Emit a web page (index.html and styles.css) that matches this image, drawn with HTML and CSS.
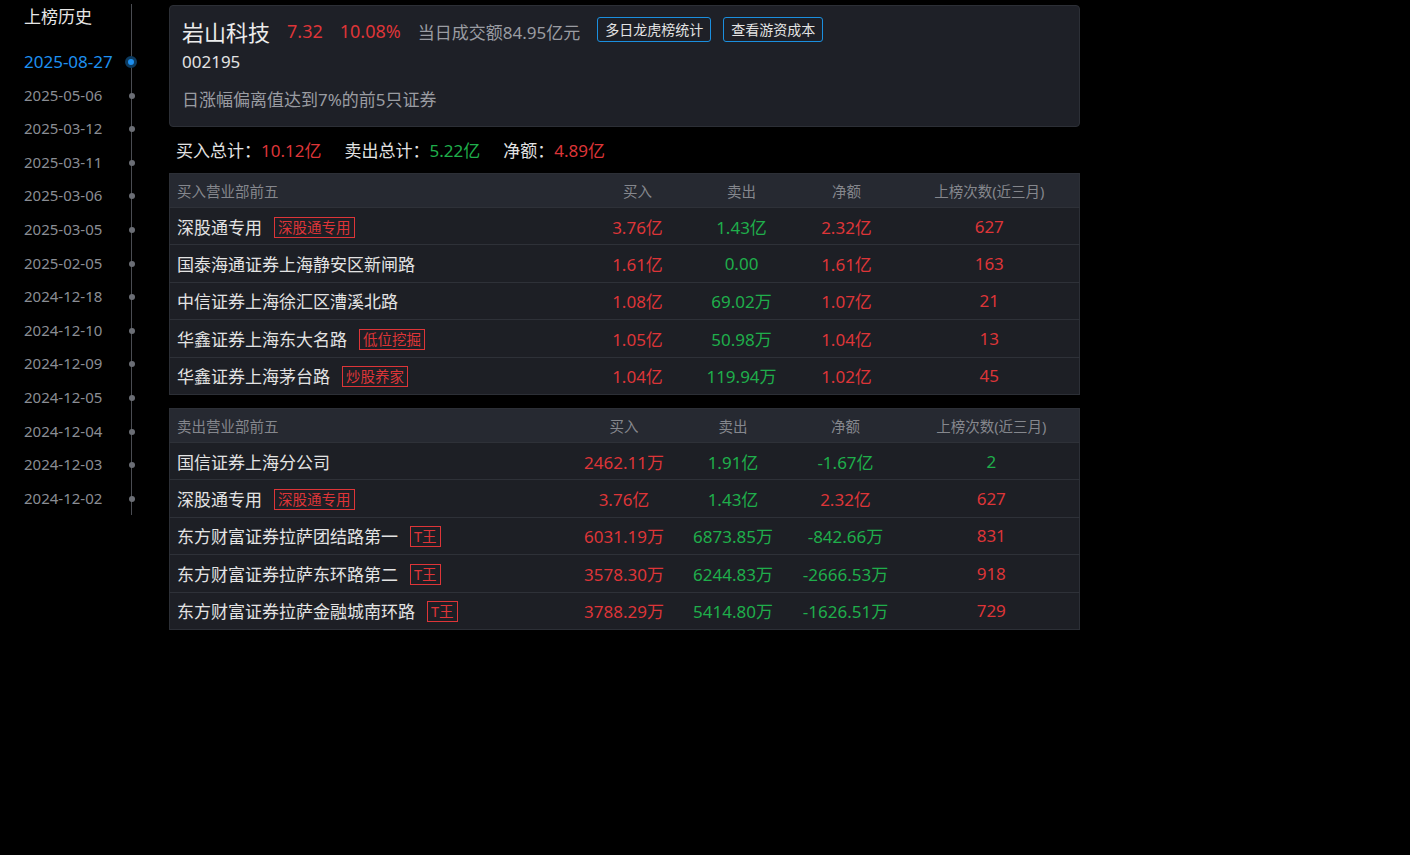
FILE: index.html
```html
<!DOCTYPE html>
<html lang="zh-CN">
<head>
  <meta charset="UTF-8">
  <title>龙虎榜 - 岩山科技</title>
  <link rel="stylesheet" href="styles.css">
</head>
<body>
  <div class="page">
    <!-- 上榜历史 timeline -->
    <aside class="history">
      <div class="history-title">上榜历史</div>
      <ul class="timeline">
        <li class="active">2025-08-27</li>
        <li>2025-05-06</li>
        <li>2025-03-12</li>
        <li>2025-03-11</li>
        <li>2025-03-06</li>
        <li>2025-03-05</li>
        <li>2025-02-05</li>
        <li>2024-12-18</li>
        <li>2024-12-10</li>
        <li>2024-12-09</li>
        <li>2024-12-05</li>
        <li>2024-12-04</li>
        <li>2024-12-03</li>
        <li>2024-12-02</li>
      </ul>
    </aside>

    <main class="content">
      <div class="stock-card">
        <div class="stock-head">
          <span class="stock-name">岩山科技</span>
          <span class="red price">7.32</span>
          <span class="red price">10.08%</span>
          <span class="muted">当日成交额84.95亿元</span>
          <button class="link-btn">多日龙虎榜统计</button>
          <button class="link-btn second">查看游资成本</button>
        </div>
        <div class="stock-code">002195</div>
        <div class="stock-reason">日涨幅偏离值达到7%的前5只证券</div>
      </div>

      <div class="summary">
        <span>买入总计：<b class="red">10.12亿</b></span>
        <span>卖出总计：<b class="green">5.22亿</b></span>
        <span>净额：<b class="red">4.89亿</b></span>
      </div>

      <table class="seat-table buy">
        <colgroup>
          <col class="c-name"><col class="c-num"><col class="c-num"><col class="c-net"><col>
        </colgroup>
        <thead>
          <tr><th class="left">买入营业部前五</th><th>买入</th><th>卖出</th><th>净额</th><th>上榜次数(近三月)</th></tr>
        </thead>
        <tbody>
          <tr><td class="left">深股通专用<span class="tag">深股通专用</span></td><td class="red">3.76亿</td><td class="green">1.43亿</td><td class="red">2.32亿</td><td class="red">627</td></tr>
          <tr><td class="left">国泰海通证券上海静安区新闸路</td><td class="red">1.61亿</td><td class="green">0.00</td><td class="red">1.61亿</td><td class="red">163</td></tr>
          <tr><td class="left">中信证券上海徐汇区漕溪北路</td><td class="red">1.08亿</td><td class="green">69.02万</td><td class="red">1.07亿</td><td class="red">21</td></tr>
          <tr><td class="left">华鑫证券上海东大名路<span class="tag">低位挖掘</span></td><td class="red">1.05亿</td><td class="green">50.98万</td><td class="red">1.04亿</td><td class="red">13</td></tr>
          <tr><td class="left">华鑫证券上海茅台路<span class="tag">炒股养家</span></td><td class="red">1.04亿</td><td class="green">119.94万</td><td class="red">1.02亿</td><td class="red">45</td></tr>
        </tbody>
      </table>

      <table class="seat-table sell">
        <colgroup>
          <col class="c-name"><col class="c-num"><col class="c-num"><col class="c-net"><col>
        </colgroup>
        <thead>
          <tr><th class="left">卖出营业部前五</th><th>买入</th><th>卖出</th><th>净额</th><th>上榜次数(近三月)</th></tr>
        </thead>
        <tbody>
          <tr><td class="left">国信证券上海分公司</td><td class="red">2462.11万</td><td class="green">1.91亿</td><td class="green">-1.67亿</td><td class="green">2</td></tr>
          <tr><td class="left">深股通专用<span class="tag">深股通专用</span></td><td class="red">3.76亿</td><td class="green">1.43亿</td><td class="red">2.32亿</td><td class="red">627</td></tr>
          <tr><td class="left">东方财富证券拉萨团结路第一<span class="tag">T王</span></td><td class="red">6031.19万</td><td class="green">6873.85万</td><td class="green">-842.66万</td><td class="red">831</td></tr>
          <tr><td class="left">东方财富证券拉萨东环路第二<span class="tag">T王</span></td><td class="red">3578.30万</td><td class="green">6244.83万</td><td class="green">-2666.53万</td><td class="red">918</td></tr>
          <tr><td class="left">东方财富证券拉萨金融城南环路<span class="tag">T王</span></td><td class="red">3788.29万</td><td class="green">5414.80万</td><td class="green">-1626.51万</td><td class="red">729</td></tr>
        </tbody>
      </table>
    </main>
  </div>
</body>
</html>
```

FILE: styles.css
```css
/* Base */
* {
  box-sizing: border-box;
  margin: 0;
  padding: 0;
}
body {
  background: #000;
  color: #e3e3e3;
  font-family: "Noto Sans", "Noto Sans CJK SC", sans-serif;
  font-size: 17px;
}
.page {
  display: flex;
  align-items: flex-start;
}
.red { color: #dd3538; }
.green { color: #1fae4b; }
.muted { color: #9a9ca2; }
b { font-weight: normal; }

/* History timeline */
.history {
  width: 132px;
  margin-top: 4px;
  border-right: 1px solid #4a4c52;
  padding-left: 24px;
}
.history-title {
  line-height: 26px;
  font-size: 17px;
  color: #e6e6e6;
}
.timeline {
  list-style: none;
  margin-top: 15px;
}
.timeline li {
  position: relative;
  height: 33.6px;
  line-height: 33.6px;
  font-size: 15px;
  color: #8a8d94;
}
.timeline li::after {
  content: "";
  position: absolute;
  right: -4px;
  top: 14px;
  width: 6px;
  height: 6px;
  border-radius: 50%;
  background: #6b6e75;
}
.timeline li.active {
  font-size: 17px;
  color: #1e90f0;
}
.timeline li.active::after {
  right: -6px;
  top: 11px;
  width: 6px;
  height: 6px;
  border: 3px solid #0d3a5e;
  background: #1e90f0;
  box-sizing: content-box;
}

/* Main column */
.content {
  margin-left: 37px;
  padding-top: 5px;
  width: 911px;
}
.stock-card {
  background: #1e2027;
  border: 1px solid #2c2f36;
  border-radius: 4px;
  padding: 9px 12px 14px;
  height: 122px;
}
.stock-head {
  display: flex;
  align-items: center;
  gap: 17px;
  height: 32px;
}
.stock-name {
  font-size: 22px;
  color: #ececec;
}
.price {
  font-size: 18px;
}
.link-btn {
  background: transparent;
  color: #e3e3e3;
  border: 1px solid #1b8fdf;
  border-radius: 3px;
  font-family: inherit;
  font-size: 14px;
  height: 25px;
  line-height: 23px;
  padding: 0 7px;
  margin-top: -4px;
}
.link-btn.second {
  margin-left: -5px;
}
.stock-code {
  line-height: 24px;
  margin-top: 3px;
}
.stock-reason {
  color: #9a9ca2;
  line-height: 24px;
  margin-top: 14px;
}

/* Summary line */
.summary {
  display: flex;
  gap: 23px;
  line-height: 24px;
  margin: 12px 0 10px 7px;
}

/* Seat tables */
.seat-table {
  width: 911px;
  border-collapse: collapse;
  background: #1d1f25;
  border: 1px solid #2c2f36;
  table-layout: fixed;
}
.seat-table + .seat-table {
  margin-top: 13px;
}
.seat-table th {
  background: #262931;
  color: #85878d;
  font-weight: normal;
  font-size: 14.5px;
  height: 34px;
  text-align: center;
}
.seat-table td {
  height: 37.4px;
  text-align: center;
  border-top: 1px solid #2e3138;
  white-space: nowrap;
}
.seat-table .left {
  text-align: left;
  padding-left: 7px;
}
.seat-table td.left {
  color: #e3e3e3;
}
.buy .c-name { width: 416px; }
.buy .c-num { width: 104px; }
.buy .c-net { width: 106px; }
.sell .c-name { width: 400px; }
.sell .c-num { width: 109px; }
.sell .c-net { width: 116px; }

.tag {
  display: inline-block;
  margin-left: 12px;
  padding: 0 3px;
  border: 1px solid #dd3538;
  color: #dd3538;
  font-size: 14.5px;
  line-height: 19px;
  height: 21px;
  vertical-align: 1px;
}
```
